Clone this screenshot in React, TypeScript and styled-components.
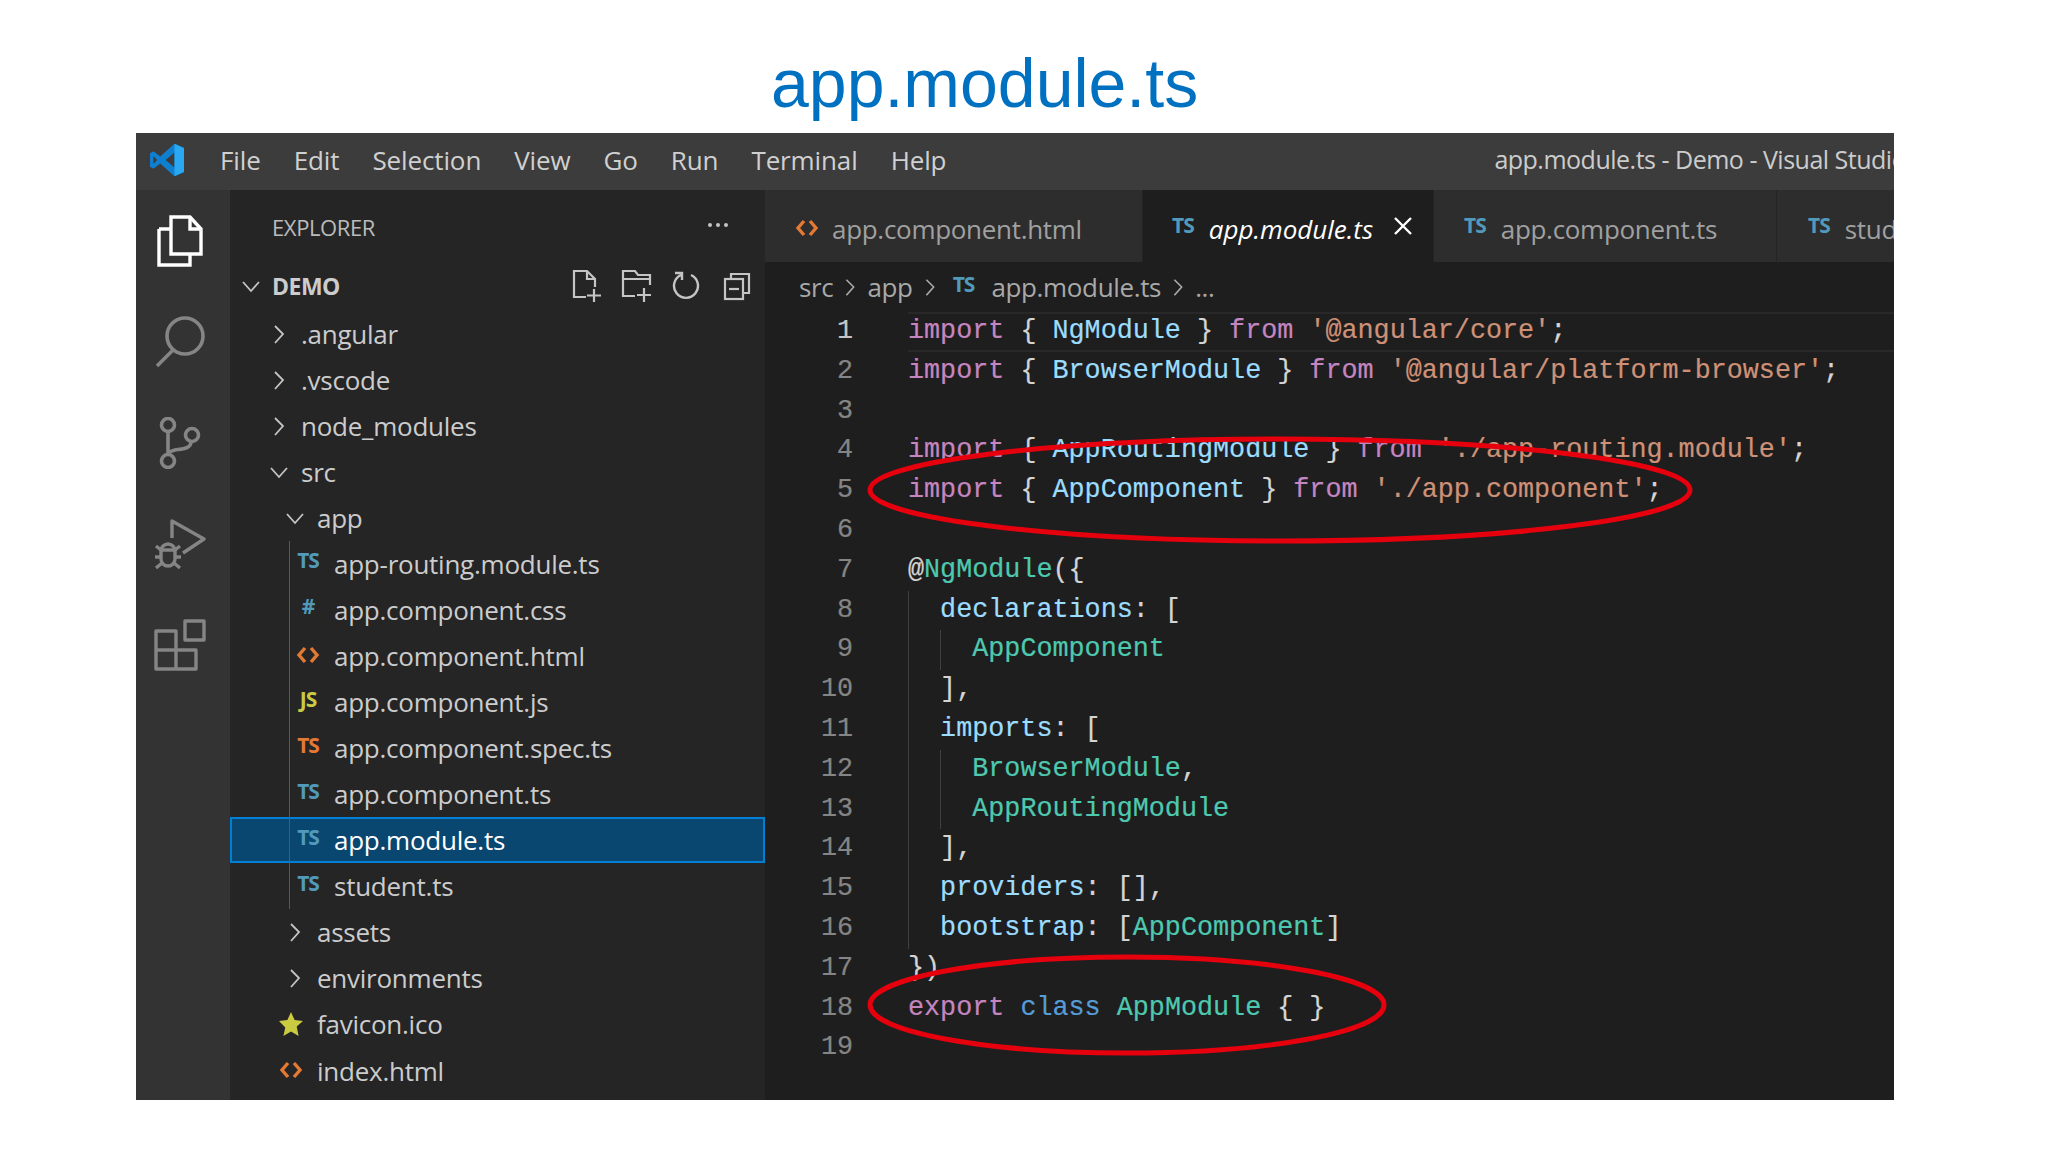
import React from "react";
import styled, { createGlobalStyle } from "styled-components";

const Global = createGlobalStyle`
  html, body { margin: 0; padding: 0; background: #fff; }
  body { width: 2048px; height: 1152px; overflow: hidden; }
`;
const UI = `"Open Sans", "Noto Sans", "Liberation Sans", sans-serif`;
const MONO = `"Liberation Mono", "DejaVu Sans Mono", monospace`;

const Page = styled.div`
  position: relative; width: 2048px; height: 1152px; background: #fff;
  display: flex; flex-direction: column; align-items: flex-start; overflow: hidden;
`;
const SlideTitle = styled.h1`
  margin: 0; height: 133px; padding-left: 771px; box-sizing: border-box;
  font: 400 68px/167px "Liberation Sans", Arial, sans-serif; color: #0070c0;
`;
const Win = styled.div`
  margin-left: 136px; width: 1758px; height: 967px; background: #1e1e1e;
  display: flex; flex-direction: column; overflow: hidden;
  font-family: ${UI};
`;
const TitleBar = styled.div`
  flex: 0 0 57px; background: #3c3c3c; display: flex; align-items: center; white-space: nowrap;
`;
const LogoSlot = styled.div` flex: 0 0 84px; box-sizing: border-box; padding: 0 0 3px 14px; display: flex; `;
const Menu = styled.nav`
  display: flex; gap: 33px; flex: 0 0 726px; color: #d0d0d0; font-size: 26px; letter-spacing: -0.12px; padding-bottom: 4px;
`;
const WinTitle = styled.div` margin-left: 548px; flex: 0 0 auto; color: #cccccc; font-size: 25px; letter-spacing: -0.5px; padding-bottom: 5px; `;
const Body = styled.div` flex: 1; display: flex; min-height: 0; `;
const Activity = styled.aside` flex: 0 0 94px; background: #333333; display: flex; flex-direction: column; `;
const ActivityItem = styled.div<{ $active?: boolean }>`
  height: 101px; box-sizing: border-box; padding-right: 6px; display: flex; align-items: center; justify-content: center;
  color: ${p => (p.$active ? "#ffffff" : "#858585")};
`;
const Side = styled.aside` flex: 0 0 535px; background: #252526; display: flex; flex-direction: column; `;
const SideHead = styled.div`
  flex: 0 0 72px; box-sizing: border-box; display: flex; align-items: center; justify-content: space-between;
  padding: 2px 37px 0 42px; color: #bbbbbb; font-size: 22px; letter-spacing: -0.4px;
`;
const Dots = styled.span` display: flex; gap: 4px; margin-bottom: 4px; `;
const Dot = styled.i` width: 4px; height: 4px; border-radius: 50%; background: #c5c5c5; `;
const RootRow = styled.div`
  flex: 0 0 48.5px; display: flex; align-items: center; padding-left: 10px; color: #cccccc;
  font-size: 23px; font-weight: 700; letter-spacing: -0.5px;
`;
const RootChevron = styled.span` width: 32px; display: flex; color: #c5c5c5; `;
const RootTools = styled.span`
  margin-left: auto; display: flex; gap: 17px; padding-right: 14px; color: #c5c5c5; align-items: center;
  & > :last-child { margin-left: 6px; }
`;
const Tree = styled.div` position: relative; display: flex; flex-direction: column; `;
const IndentLine = styled.div`
  position: absolute; left: 59px; top: 230px; width: 1px; height: 368px; background: #585858;
`;
const Row = styled.div<{ $indent: number; $slot: number; $gap: number; $sel?: boolean }>`
  height: 46.07px; box-sizing: border-box; display: flex; align-items: center;
  padding-left: ${p => p.$indent}px;
  color: ${p => (p.$sel ? "#ffffff" : "#cccccc")};
  background: ${p => (p.$sel ? "#094771" : "transparent")};
  outline: ${p => (p.$sel ? "2px solid #007fd4" : "none")};
  outline-offset: -2px;
  font-size: 26px; letter-spacing: -0.25px; white-space: nowrap;
  & > :first-child { flex: 0 0 ${p => p.$slot}px; margin-right: ${p => p.$gap}px; }
`;
const Slot = styled.span<{ $c?: string }>`
  display: flex; align-items: center; justify-content: center; color: ${p => p.$c || "#c5c5c5"};
  height: 30px;
`;
const Badge = styled.span<{ $c: string }>`
  font: 700 21px/1 ${UI}; letter-spacing: -1px; color: ${p => p.$c}; margin-top: -6px;
`;
const Main = styled.main` flex: 1; min-width: 0; display: flex; flex-direction: column; background: #1e1e1e; `;
const Tabs = styled.div` flex: 0 0 72px; display: flex; background: #252526; white-space: nowrap; overflow: hidden; `;
const Tab = styled.div<{ $w: number; $pad: number; $gap: number; $active?: boolean }>`
  flex: 0 0 ${p => p.$w}px; box-sizing: border-box; padding: 5px 0 0 ${p => p.$pad}px;
  display: flex; align-items: center; gap: ${p => p.$gap}px;
  background: ${p => (p.$active ? "#1e1e1e" : "#2d2d2d")};
  border-right: 1px solid #252526;
  color: ${p => (p.$active ? "#ffffff" : "#a0a0a0")};
  font-size: 26px; letter-spacing: ${p => (p.$active ? "0" : "-0.3px")}; font-style: ${p => (p.$active ? "italic" : "normal")};
`;
const TabClose = styled.span` margin-left: 5px; display: flex; color: #fff; margin-bottom: 6px; `;
const Crumbs = styled.div`
  flex: 0 0 50px; display: flex; align-items: center; gap: 7px; padding-left: 34px;
  color: #a9a9a9; font-size: 26px; letter-spacing: -0.35px; white-space: nowrap;
`;
const CrumbIcon = styled.span` margin-left: 6px; display: flex; `;
const CrumbFile = styled.span` margin-left: 10px; `;
const Code = styled.div` display: flex; flex-direction: column; font: 400 26.75px/39.8px ${MONO}; -webkit-text-stroke: 0.2px; `;
const Line = styled.div` height: 39.8px; display: flex; white-space: pre; `;
const Gutter = styled.span<{ $on?: boolean }>`
  flex: 0 0 88px; text-align: right; color: ${p => (p.$on ? "#c6c6c6" : "#858585")};
`;
const Text = styled.span<{ $guides: number; $current?: boolean }>`
  flex: 1; margin-left: 55px; box-sizing: border-box; color: #d4d4d4;
  background-repeat: no-repeat;
  background-image: ${p => (p.$guides > 0 ? "linear-gradient(#404040,#404040)" : "none")}${p => (p.$guides > 1 ? ",linear-gradient(#404040,#404040)" : "")};
  background-size: 1px 100%${p => (p.$guides > 1 ? ",1px 100%" : "")};
  background-position: 0 0${p => (p.$guides > 1 ? ",32px 0" : "")};
  box-shadow: ${p => (p.$current ? "inset 0 2px 0 #282828, inset 0 -2px 0 #282828" : "none")};
`;
const Tok = styled.span<{ $c: string }>` color: ${p => p.$c}; `;
const Marks = styled.svg` position: absolute; left: 0; top: 0; pointer-events: none; `;

const K = "#c586c0", B = "#569cd6", V = "#9cdcfe", S = "#ce9178", G = "#4ec9b0", P = "#d4d4d4";
type T = [string, string];
const lines: { g: number; t: T[] }[] = [
  { g: 0, t: [[K, "import"], [P, " { "], [V, "NgModule"], [P, " } "], [K, "from"], [P, " "], [S, "'@angular/core'"], [P, ";"]] },
  { g: 0, t: [[K, "import"], [P, " { "], [V, "BrowserModule"], [P, " } "], [K, "from"], [P, " "], [S, "'@angular/platform-browser'"], [P, ";"]] },
  { g: 0, t: [] },
  { g: 0, t: [[K, "import"], [P, " { "], [V, "AppRoutingModule"], [P, " } "], [K, "from"], [P, " "], [S, "'./app-routing.module'"], [P, ";"]] },
  { g: 0, t: [[K, "import"], [P, " { "], [V, "AppComponent"], [P, " } "], [K, "from"], [P, " "], [S, "'./app.component'"], [P, ";"]] },
  { g: 0, t: [] },
  { g: 0, t: [[P, "@"], [G, "NgModule"], [P, "({"]] },
  { g: 1, t: [[P, "  "], [V, "declarations"], [P, ": ["]] },
  { g: 2, t: [[P, "    "], [G, "AppComponent"]] },
  { g: 1, t: [[P, "  ],"]] },
  { g: 1, t: [[P, "  "], [V, "imports"], [P, ": ["]] },
  { g: 2, t: [[P, "    "], [G, "BrowserModule"], [P, ","]] },
  { g: 2, t: [[P, "    "], [G, "AppRoutingModule"]] },
  { g: 1, t: [[P, "  ],"]] },
  { g: 1, t: [[P, "  "], [V, "providers"], [P, ": [],"]] },
  { g: 1, t: [[P, "  "], [V, "bootstrap"], [P, ": ["], [G, "AppComponent"], [P, "]"]] },
  { g: 0, t: [[P, "})"]] },
  { g: 0, t: [[K, "export"], [P, " "], [B, "class"], [P, " "], [G, "AppModule"], [P, " { }"]] },
  { g: 0, t: [] },
];

const Chevron = ({ open, size = 22 }: { open?: boolean; size?: number }) => (
  <svg width={size} height={size} viewBox="0 0 22 22" fill="none" stroke="currentColor" strokeWidth="1.8">
    {open ? <path d="M3 7l8 9 8-9" /> : <path d="M7 3l8 8-8 9" />}
  </svg>
);
const Html = ({ c = "#e37933" }: { c?: string }) => (
  <svg width="24" height="22" viewBox="0 0 24 22" fill="none" stroke={c} strokeWidth="3.4">
    <path d="M9 3l-6 7 6 7M15 3l6 7-6 7" />
  </svg>
);
const Star = () => (
  <svg width="26" height="26" viewBox="0 0 26 26" fill="#cbcb41"><path d="M13 1l3.600 8 8.400.9-6.300 5.600L20.600 25 13 20.400 5.400 25l1.900-8.500L1 9.900 9.400 9z" /></svg>
);
const Logo = () => (
  <svg width="34" height="34" viewBox="0 0 100 100">
    <path fillRule="evenodd" d="M72 2 100 15V85L72 98 30 60 10 76 0 70V30L10 24 30 40zM72 28 46 50 72 72zM10 38V62L21 50z" fill="#0f7fd0" />
    <path fillRule="evenodd" d="M72 2 100 15V85L72 98V72V28z" fill="#2aa8f2" />
  </svg>
);
const FilesIcon = () => (
  <svg width="46" height="52" viewBox="0 0 46 52" fill="none" stroke="currentColor" strokeWidth="3.400">
    <path d="M2 14h11M2 14v36h31V39" />
    <path d="M14 2h19l11 12v25H14z" />
    <path d="M33 2v12h11" />
  </svg>
);
const SearchIcon = () => (
  <svg width="50" height="52" viewBox="0 0 50 52" fill="none" stroke="currentColor" strokeWidth="3.600">
    <circle cx="30" cy="20" r="18" />
    <path d="M18 34 2 50" />
  </svg>
);
const GitIcon = () => (
  <svg width="42" height="52" viewBox="0 0 42 52" fill="none" stroke="currentColor" strokeWidth="3.600">
    <circle cx="9" cy="8" r="6.500" />
    <circle cx="9" cy="44" r="6.500" />
    <circle cx="33" cy="18" r="6.500" />
    <path d="M9 15v22M32 25c0 7-10 7-16 8-4 1-7 2-7 4" />
  </svg>
);
const RunIcon = () => (
  <svg width="52" height="52" viewBox="0 0 52 52" fill="none" stroke="currentColor" strokeWidth="3.400" strokeLinejoin="round">
    <path d="M18 20V3l32 18-21 14" />
    <path d="M7 33a7 7 0 0 1 14 0v8a7 7 0 0 1-14 0z" />
    <path d="M7 32h14M2 28l5 4M26 28l-5 4M1 39h6M21 39h6M2 50l6-5M26 50l-6-5" />
  </svg>
);
const ExtIcon = () => (
  <svg width="52" height="52" viewBox="0 0 52 52" fill="none" stroke="currentColor" strokeWidth="3.400" strokeLinejoin="round">
    <rect x="31" y="2" width="19" height="19" />
    <path d="M2 12h20v38H2zM2 31h40v19H22" />
  </svg>
);
const NewFile = () => (
  <svg width="32" height="34" viewBox="0 0 32 34" fill="none" stroke="currentColor" strokeWidth="2.200">
    <path d="M14 28H2V2h13l8 8v8M15 2v8h8M22 20v13M15 26.500h14" />
  </svg>
);
const NewFolder = () => (
  <svg width="34" height="34" viewBox="0 0 34 34" fill="none" stroke="currentColor" strokeWidth="2.200">
    <path d="M14 27H2V2h12l3 4h12v10M2 10h27M23 19v14M16 26h14" />
  </svg>
);
const Refresh = () => (
  <svg width="28" height="30" viewBox="0 0 28 30" fill="none" stroke="currentColor" strokeWidth="2.400">
    <path d="M9 4a12 12 0 1 0 10 0M3 2h7v7" />
  </svg>
);
const Collapse = () => (
  <svg width="28" height="30" viewBox="0 0 28 30" fill="none" stroke="currentColor" strokeWidth="2.200">
    <path d="M8 8V3h18v19h-6" />
    <rect x="2" y="8" width="18" height="20" />
    <path d="M6 18h10" />
  </svg>
);
const CloseX = () => (
  <svg width="20" height="20" viewBox="0 0 20 20" fill="none" stroke="currentColor" strokeWidth="2.400"><path d="M2 2l16 16M18 2 2 18" /></svg>
);
const BLUE = "#519aba";
const Ts = () => <Badge $c={BLUE}>TS</Badge>;

const Folder = ({ depth, open, name }: { depth: 1 | 2; open?: boolean; name: string }) => (
  <Row $indent={depth === 1 ? 37 : 53} $slot={24} $gap={10}>
    <Slot><Chevron open={open} /></Slot>
    {name}
  </Row>
);
const File = ({ icon, name, sel }: { icon: React.ReactNode; name: string; sel?: boolean }) => (
  <Row $indent={65} $slot={26} $gap={13} $sel={sel}>
    <Slot>{icon}</Slot>
    {name}
  </Row>
);
const TopFile = ({ icon, name }: { icon: React.ReactNode; name: string }) => (
  <Row $indent={47} $slot={28} $gap={12}>
    <Slot>{icon}</Slot>
    {name}
  </Row>
);

export default function App() {
  return (
    <Page>
      <Global />
      <SlideTitle>app.module.ts</SlideTitle>
      <Win>
        <TitleBar>
          <LogoSlot><Logo /></LogoSlot>
          <Menu>
            {["File", "Edit", "Selection", "View", "Go", "Run", "Terminal", "Help"].map(m => <span key={m}>{m}</span>)}
          </Menu>
          <WinTitle>app.module.ts - Demo - Visual Studio Code</WinTitle>
        </TitleBar>
        <Body>
          <Activity>
            <ActivityItem $active><FilesIcon /></ActivityItem>
            <ActivityItem><SearchIcon /></ActivityItem>
            <ActivityItem><GitIcon /></ActivityItem>
            <ActivityItem><RunIcon /></ActivityItem>
            <ActivityItem><ExtIcon /></ActivityItem>
          </Activity>
          <Side>
            <SideHead>
              <span>EXPLORER</span>
              <Dots><Dot /><Dot /><Dot /></Dots>
            </SideHead>
            <RootRow>
              <RootChevron><Chevron open /></RootChevron>
              DEMO
              <RootTools><NewFile /><NewFolder /><Refresh /><Collapse /></RootTools>
            </RootRow>
            <Tree>
              <IndentLine />
              <Folder depth={1} name=".angular" />
              <Folder depth={1} name=".vscode" />
              <Folder depth={1} name="node_modules" />
              <Folder depth={1} open name="src" />
              <Folder depth={2} open name="app" />
              <File icon={<Ts />} name="app-routing.module.ts" />
              <File icon={<Badge $c={BLUE}>#</Badge>} name="app.component.css" />
              <File icon={<Html />} name="app.component.html" />
              <File icon={<Badge $c="#cbcb41">JS</Badge>} name="app.component.js" />
              <File icon={<Badge $c="#e37933">TS</Badge>} name="app.component.spec.ts" />
              <File icon={<Ts />} name="app.component.ts" />
              <File icon={<Ts />} name="app.module.ts" sel />
              <File icon={<Ts />} name="student.ts" />
              <Folder depth={2} name="assets" />
              <Folder depth={2} name="environments" />
              <TopFile icon={<Star />} name="favicon.ico" />
              <TopFile icon={<Html />} name="index.html" />
            </Tree>
          </Side>
          <Main>
            <Tabs>
              <Tab $w={378} $pad={30} $gap={13}><Html />app.component.html</Tab>
              <Tab $w={291} $pad={29} $gap={15} $active><Ts />app.module.ts<TabClose><CloseX /></TabClose></Tab>
              <Tab $w={343} $pad={30} $gap={15}><Ts />app.component.ts</Tab>
              <Tab $w={300} $pad={31} $gap={15}><Ts />student.ts</Tab>
            </Tabs>
            <Crumbs>
              <span>src</span><Chevron size={20} /><span>app</span><Chevron size={20} />
              <CrumbIcon><Ts /></CrumbIcon><CrumbFile>app.module.ts</CrumbFile><Chevron size={20} /><span>...</span>
            </Crumbs>
            <Code>
              {lines.map((l, i) => (
                <Line key={i}>
                  <Gutter $on={i === 0}>{i + 1}</Gutter>
                  <Text $guides={l.g} $current={i === 0}>
                    {l.t.map((t, j) => <Tok key={j} $c={t[0]}>{t[1]}</Tok>)}
                  </Text>
                </Line>
              ))}
            </Code>
          </Main>
        </Body>
      </Win>
      <Marks width="2048" height="1152" viewBox="0 0 2048 1152" fill="none" stroke="#e6000e" strokeWidth="5">
        <ellipse cx="1280" cy="490" rx="410" ry="51" />
        <ellipse cx="1127" cy="1005" rx="257" ry="48" />
      </Marks>
    </Page>
  );
}
